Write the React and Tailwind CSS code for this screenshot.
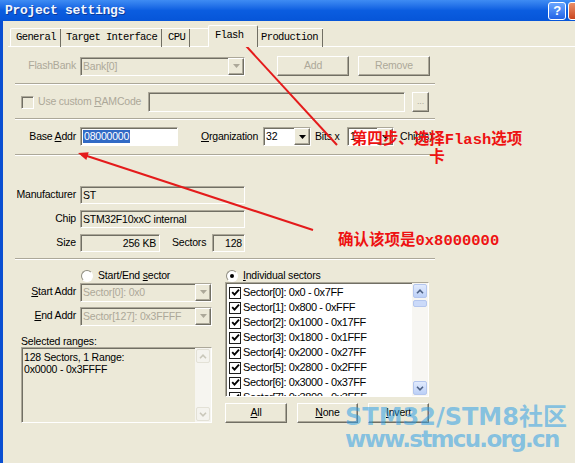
import React from "react";

const grey = "text-[#aca899]";

function Sunken({ className = "", children }) {
  return (
    <div
      className={`border border-t-[#aca899] border-l-[#aca899] border-r-white border-b-white shadow-[inset_1px_1px_0_#716f64] ${className}`}
    >
      {children}
    </div>
  );
}

function Raised({ className = "", children }) {
  return (
    <div
      className={`flex shrink-0 items-center justify-center border border-t-white border-l-white border-r-[#716f64] border-b-[#716f64] bg-[#ece9d8] shadow-[inset_-1px_-1px_0_#aca899] ${className}`}
    >
      {children}
    </div>
  );
}

function Tri({ color = "#000" }) {
  return (
    <svg width="7" height="4" viewBox="0 0 7 4">
      <path d="M0 0h7L3.5 4z" fill={color} />
    </svg>
  );
}

function Chevron({ up, color }) {
  return (
    <svg width="8" height="5" viewBox="0 0 8 5">
      <path
        d={up ? "M1 4.2l3-3 3 3" : "M1 0.8l3 3 3-3"}
        stroke={color}
        strokeWidth="1.6"
        fill="none"
      />
    </svg>
  );
}

function Combo({ className = "", text, disabled, white }) {
  return (
    <Sunken className={`flex h-[19px] shrink-0 ${white ? "bg-white" : "bg-[#ece9d8]"} ${className}`}>
      <span className={`flex-1 truncate pl-[2px] leading-[17px] ${disabled ? grey : "text-black"}`}>
        {text}
      </span>
      <Raised className="h-[17px] w-[16px]">
        <Tri color={disabled ? "#aca899" : "#000"} />
      </Raised>
    </Sunken>
  );
}

function Label({ children, className = "" }) {
  return (
    <span className={`w-[65px] shrink-0 pr-[4px] text-right ${className}`}>{children}</span>
  );
}

function Sep() {
  return <div className="h-[2px] w-[420px] border-t border-b border-t-[#aca899] border-b-white" />;
}

function Radio({ on }) {
  return (
    <div className="flex h-[12px] w-[12px] shrink-0 items-center justify-center rounded-full border border-t-[#8f8d80] border-l-[#8f8d80] border-r-white border-b-white bg-white">
      {on && <div className="h-[4px] w-[4px] rounded-full bg-black" />}
    </div>
  );
}

function Tick() {
  return (
    <div className="flex h-[12px] w-[12px] shrink-0 items-center justify-center border border-[#1c1c1c] bg-white">
      <svg width="9" height="9" viewBox="0 0 9 9">
        <path d="M1.2 4.2l2.3 2.4L8 1.6" stroke="#000" strokeWidth="1.9" fill="none" />
      </svg>
    </div>
  );
}

function Tab({ label, active }) {
  if (active) {
    return (
      <div className="relative z-10 -mx-[2px] -mb-[1px] flex h-[22px] w-[50px] items-start rounded-t-[2px] border-t border-l border-r border-t-white border-l-white border-r-[#716f64] bg-[#ece9d8] pt-[2px] pl-[6px]">
        {label}
      </div>
    );
  }
  return (
    <div className="flex h-[18px] items-center border-r border-r-[#716f64] pl-[5px] pr-[4px]">
      {label}
    </div>
  );
}

const sectors = [
  "Sector[0]: 0x0 - 0x7FF",
  "Sector[1]: 0x800 - 0xFFF",
  "Sector[2]: 0x1000 - 0x17FF",
  "Sector[3]: 0x1800 - 0x1FFF",
  "Sector[4]: 0x2000 - 0x27FF",
  "Sector[5]: 0x2800 - 0x2FFF",
  "Sector[6]: 0x3000 - 0x37FF",
  "Sector[7]: 0x3800 - 0x3FFF",
];

export default function App() {
  return (
    <div className="relative h-[463px] w-[575px] overflow-hidden bg-[#ece9d8] font-['Liberation_Sans',Arial,sans-serif] text-[10.5px] tracking-[-0.2px] text-black">
      {/* title bar */}
      <div className="flex h-[21px] items-center justify-between bg-linear-to-b from-[#3f8cf3] via-[#0b5de0] to-[#0655d8]">
        <span className="pl-[5px] font-['Liberation_Mono',monospace] text-[13px] font-bold tracking-[-0.3px] text-[#f2f6ff] [text-shadow:1px_1px_0_#0a3a9a]">
          Project settings
        </span>
        <div className="-mr-[11px] flex gap-[2px]">
          <div className="flex h-[18px] w-[18px] items-center justify-center rounded-[3px] border border-white bg-linear-to-b from-[#6aa6ff] to-[#2262e6] text-[13px] font-bold text-white">
            ?
          </div>
          <div className="h-[18px] w-[18px] rounded-[3px] border border-white bg-linear-to-b from-[#eb9068] to-[#c9441c]" />
        </div>
      </div>

      <div className="h-[442px] border-l-[3px] border-l-[#0a4fd2]">
        {/* tabs */}
        <div className="flex h-[25px] items-end pl-[7px] pt-[4px] font-['Liberation_Mono',monospace] text-[10.5px] tracking-[-0.6px]">
          <div className="flex h-[18px] w-[51px] items-center border-l border-t border-l-white border-t-white rounded-tl-[2px]">
            <Tab label="General" />
          </div>
          <div className="flex h-[18px] w-[102px] items-center border-t border-t-white">
            <Tab label="Target Interface" />
          </div>
          <div className="flex h-[18px] w-[47px] items-center border-t border-t-white">
            <Tab label="CPU" />
          </div>
          <Tab label="Flash" active />
          <div className="flex h-[18px] w-[67px] items-center border-t border-t-white">
            <Tab label="Production" />
          </div>
        </div>

        {/* panel */}
        <div className="ml-[5px] border-t border-t-white pl-[7px]">
          {/* flash bank */}
          <div className="mt-[9px] flex h-[20px] items-center">
            <Label className={grey}>FlashBank</Label>
            <Combo className="w-[165px]" text="Bank[0]" disabled />
            <Raised className={`ml-[32px] h-[20px] w-[72px] ${grey}`}>Add</Raised>
            <Raised className={`ml-[9px] h-[20px] w-[72px] ${grey}`}>Remove</Raised>
          </div>
          <div className="mt-[7px]">
            <Sep />
          </div>

          {/* custom ram code */}
          <div className="mt-[7px] flex h-[20px] items-center">
            <Sunken className="ml-[6px] h-[13px] w-[13px] shrink-0 bg-[#ece9d8]" />
            <span className={`ml-[4px] w-[110px] shrink-0 ${grey}`}>
              Use custom <u>R</u>AMCode
            </span>
            <Sunken className="h-[20px] w-[257px] shrink-0 bg-[#ece9d8]" />
            <Raised className={`ml-[7px] h-[20px] w-[17px] text-[9px] ${grey}`}>...</Raised>
          </div>
          <div className="mt-[6px]">
            <Sep />
          </div>

          {/* base address */}
          <div className="mt-[7px] flex h-[19px] items-center">
            <Label>
              Base <u>A</u>ddr
            </Label>
            <Sunken className="flex h-[19px] w-[98px] shrink-0 items-center bg-white pl-[2px]">
              <span className="bg-[#316ac5] px-[1px] leading-[13px] text-white">08000000</span>
            </Sunken>
            <span className="ml-[23px] w-[62px] shrink-0">
              <u>O</u>rganization
            </span>
            <Combo className="w-[48px]" text="32" white />
            <span className="ml-[4px] w-[32px] shrink-0">Bits x</span>
            <Combo className="w-[47px]" text="1" white />
            <span className="ml-[6px]">Chip(s)</span>
          </div>
          <div className="mt-[8px]">
            <Sep />
          </div>

          {/* device info */}
          <div className="mt-[30px] flex h-[18px] items-center">
            <Label>Manufacturer</Label>
            <Sunken className="h-[18px] w-[165px] shrink-0 pl-[2px] leading-[16px]">ST</Sunken>
          </div>
          <div className="mt-[6px] flex h-[18px] items-center">
            <Label>Chip</Label>
            <Sunken className="h-[18px] w-[165px] shrink-0 pl-[2px] leading-[16px]">
              STM32F10xxC internal
            </Sunken>
          </div>
          <div className="mt-[6px] flex h-[18px] items-center">
            <Label>Size</Label>
            <Sunken className="h-[18px] w-[80px] shrink-0 pr-[3px] text-right leading-[16px]">
              256 KB
            </Sunken>
            <span className="ml-[12px] w-[40px] shrink-0">Sectors</span>
            <Sunken className="h-[18px] w-[33px] shrink-0 pr-[2px] text-right leading-[16px]">
              128
            </Sunken>
          </div>
          <div className="mt-[6px]">
            <Sep />
          </div>

          {/* sector selection */}
          <div className="flex">
            <div className="w-[197px] shrink-0">
              <div className="mt-[9px] flex h-[13px] items-center pl-[66px]">
                <Radio />
                <span className="ml-[5px]">
                  Start/End <u>s</u>ector
                </span>
              </div>
              <div className="mt-[1px] flex h-[18px] items-center">
                <Label>
                  <u>S</u>tart Addr
                </Label>
                <Combo className="h-[18px] w-[132px]" text="Sector[0]: 0x0" disabled />
              </div>
              <div className="mt-[6px] flex h-[18px] items-center">
                <Label>
                  <u>E</u>nd Addr
                </Label>
                <Combo className="h-[18px] w-[132px]" text="Sector[127]: 0x3FFFF" disabled />
              </div>
              <div className="mt-[10px] h-[12px] pl-[6px] leading-[12px]">Selected ranges:</div>
              <Sunken className="ml-[6px] flex h-[76px] w-[191px] bg-[#ece9d8]">
                <div className="flex-1 pl-[2px] pt-[3px] leading-[12px]">
                  <div>128 Sectors, 1 Range:</div>
                  <div>0x0000 - 0x3FFFF</div>
                </div>
                <div className="flex w-[16px] flex-col justify-between bg-[#f6f5f0] p-[1px]">
                  <div className="flex h-[14px] items-center justify-center rounded-[2px] border border-[#e3e1d6] bg-[#f4f3ee]">
                    <Chevron up color="#c9c7ba" />
                  </div>
                  <div className="flex h-[14px] items-center justify-center rounded-[2px] border border-[#e3e1d6] bg-[#f4f3ee]">
                    <Chevron color="#c9c7ba" />
                  </div>
                </div>
              </Sunken>
            </div>

            <div className="ml-[13px] w-[204px] shrink-0">
              <div className="mt-[9px] flex h-[13px] items-center pl-[1px]">
                <Radio on />
                <span className="ml-[5px]">
                  <u>I</u>ndividual sectors
                </span>
              </div>
              <Sunken className="flex h-[115px] w-[204px] overflow-hidden bg-white">
                <div className="flex-1 pt-[2px]">
                  {sectors.map((s) => (
                    <div key={s} className="flex h-[15px] items-center pl-[3px]">
                      <Tick />
                      <span className="ml-[2px] text-[11px] tracking-[-0.4px]">{s}</span>
                    </div>
                  ))}
                </div>
                <div className="flex w-[16px] flex-col bg-[#f7f6f2] p-[1px]">
                  <div className="flex h-[14px] items-center justify-center rounded-[2px] border border-[#b4c6ee] bg-linear-to-b from-[#e2ebfd] to-[#bcd0f7]">
                    <Chevron up color="#4d6185" />
                  </div>
                  <div className="mt-[2px] h-[7px] rounded-[2px] border border-[#b4c6ee] bg-[#cbdaf9]" />
                  <div className="flex-1" />
                  <div className="flex h-[14px] items-center justify-center rounded-[2px] border border-[#b4c6ee] bg-linear-to-b from-[#e2ebfd] to-[#bcd0f7]">
                    <Chevron color="#4d6185" />
                  </div>
                </div>
              </Sunken>
              <div className="mt-[6px] flex">
                <Raised className="h-[20px] w-[62px]">
                  <u>A</u>ll
                </Raised>
                <Raised className="ml-[10px] h-[20px] w-[61px]">
                  <u>N</u>one
                </Raised>
                <Raised className="ml-[10px] h-[20px] w-[61px]">
                  <u>I</u>nvert
                </Raised>
              </div>
            </div>
          </div>
        </div>
      </div>

      {/* annotation arrows */}
      <svg className="pointer-events-none absolute inset-0" width="575" height="463">
        <line x1="236" y1="35" x2="337" y2="145" stroke="#e41b1b" strokeWidth="2" />
        <polygon points="234,33 243.7,37.7 237.9,43.1" fill="#e41b1b" />
        <line x1="81" y1="154" x2="313" y2="230" stroke="#e41b1b" strokeWidth="2" />
        <polygon points="78,153 88.7,152.3 86.3,159.9" fill="#e41b1b" />
      </svg>

      {/* annotation notes */}
      <div className="pointer-events-none absolute left-[348px] top-[131px] w-[178px] text-center font-['Liberation_Mono','Noto_Sans_CJK_SC',monospace] text-[15.5px] font-bold leading-[18px] tracking-normal text-[#ee1212]">
        第四步、选择Flash选项
        <br />
        卡
      </div>
      <div className="pointer-events-none absolute left-[338px] top-[232px] font-['Liberation_Mono','Noto_Sans_CJK_SC',monospace] text-[15.5px] font-bold leading-[18px] tracking-normal text-[#ee1212]">
        确认该项是0x8000000
      </div>

      {/* site watermark */}
      <div className="pointer-events-none absolute left-[345px] top-[405px] font-['DejaVu_Sans','Noto_Sans_CJK_SC',sans-serif] font-bold tracking-normal text-[#2c9ee6]/55">
        <div className="h-[24px] text-[24px] leading-[24px]">STM32/STM8社区</div>
        <div className="h-[20px] text-[23px] leading-[20px] tracking-[-1.7px]">www.stmcu.org.cn</div>
      </div>
    </div>
  );
}
